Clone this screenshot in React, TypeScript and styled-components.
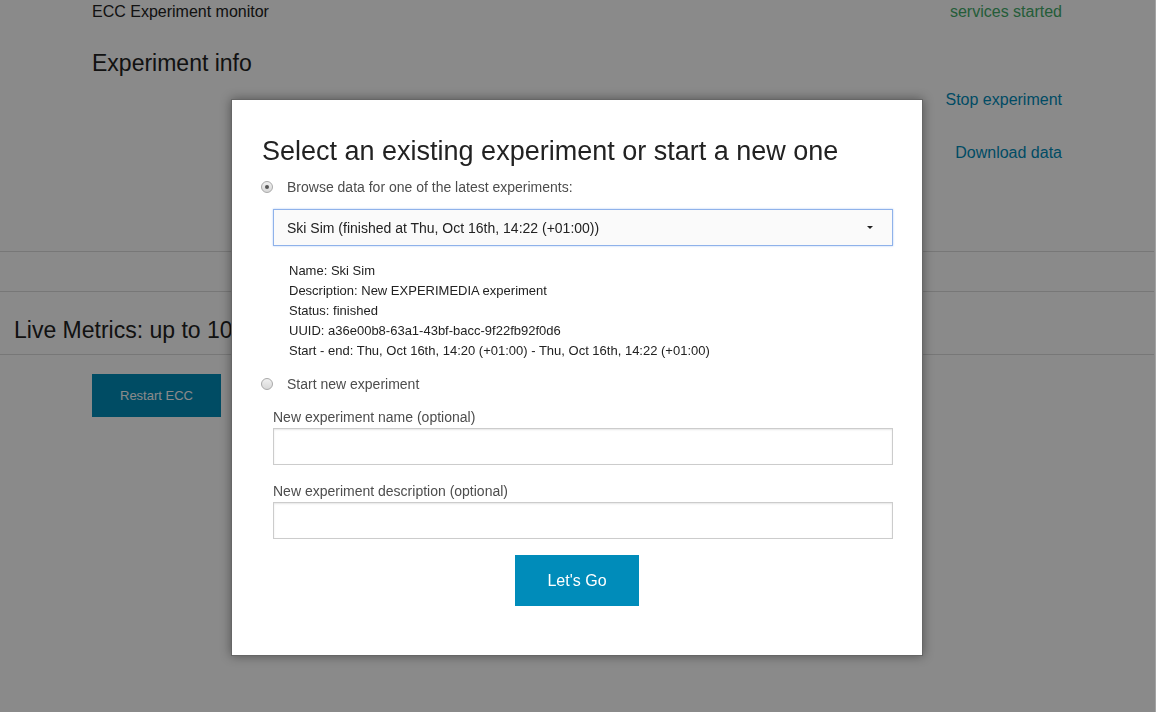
import React from "react";
import styled, { createGlobalStyle } from "styled-components";

const GlobalStyle = createGlobalStyle`
  html, body {
    margin: 0;
    padding: 0;
    background: #ffffff;
    font-family: "Liberation Sans", Arial, Helvetica, sans-serif;
    color: #222222;
  }
  * { box-sizing: border-box; }
`;

const Page = styled.div`
  position: relative;
  width: 1154px;
  min-height: 712px;
`;

const Row = styled.div`
  max-width: 1000px;
  margin: 0 auto;
  padding: 0 15px;
  display: flex;
  justify-content: space-between;
  align-items: flex-start;
`;

const TopBar = styled(Row)`
  padding-top: 1px;
  height: 23px;
  line-height: 22px;
  font-size: 16px;
`;

const Status = styled.span`
  color: #43ac6a;
`;

const InfoRow = styled(Row)`
  padding-top: 25px;
  height: 228px;
`;

const Heading = styled.h2`
  margin: 0;
  font-size: 23px;
  font-weight: normal;
  line-height: 30px;
  color: #222;
`;

const Actions = styled.div`
  display: flex;
  flex-direction: column;
  align-items: flex-end;
  gap: 33px;
  padding-top: 42px;
`;

const Link = styled.a`
  font-size: 16px;
  line-height: 20px;
  color: #008cba;
  text-decoration: none;
`;

const Rule = styled.div`
  height: 1px;
  background: #dddddd;
`;

const Spacer = styled.div`
  height: 39px;
`;

const MetricsHeading = styled.h4`
  margin: 0;
  padding: 22px 14px 8px;
  font-size: 23px;
  font-weight: normal;
  line-height: 32px;
  white-space: nowrap;
`;

const ButtonRow = styled(Row)`
  padding-top: 19px;
`;

const Button = styled.button<{ $large?: boolean }>`
  border: none;
  margin: 0;
  background: #008cba;
  color: #ffffff;
  font-family: inherit;
  font-size: ${(p) => (p.$large ? "16px" : "13px")};
  padding: ${(p) => (p.$large ? "17px 32px" : "14px 28px")};
  line-height: ${(p) => (p.$large ? "17px" : "15px")};
  cursor: pointer;
`;

const Overlay = styled.div`
  position: fixed;
  inset: 0;
  background: rgba(0, 0, 0, 0.46);
  box-shadow: inset -1px 0 0 rgba(255, 255, 255, 0.22);
`;

const Modal = styled.div`
  position: absolute;
  top: 99px;
  left: 231px;
  width: 692px;
  background: #ffffff;
  border: 1px solid #666666;
  box-shadow: 0 0 10px rgba(0, 0, 0, 0.4);
  padding: 30px 30px 49px;
`;

const Title = styled.h3`
  margin: 2px 0 6px;
  font-size: 27px;
  font-weight: normal;
  line-height: 38px;
  color: #222;
`;

const RadioRow = styled.label<{ $top?: number }>`
  display: flex;
  align-items: center;
  height: 22px;
  margin-top: ${(p) => p.$top ?? 0}px;
  font-size: 14px;
  color: #4d4d4d;
`;

const Radio = styled.span<{ $checked?: boolean }>`
  position: relative;
  width: 12px;
  height: 12px;
  margin-left: -1px;
  margin-right: 14px;
  border-radius: 50%;
  border: 1px solid #a9a9a9;
  background: linear-gradient(#f0f0f0, #d8d8d8);
  &::after {
    content: "";
    display: ${(p) => (p.$checked ? "block" : "none")};
    position: absolute;
    top: 3px;
    left: 3px;
    width: 4px;
    height: 4px;
    border-radius: 50%;
    background: #555;
  }
`;

const Indent = styled.div`
  margin-left: 11px;
  width: 620px;
`;

const Select = styled.div`
  margin-top: 11px;
  height: 37px;
  display: flex;
  align-items: center;
  justify-content: space-between;
  padding: 0 19px 0 13px;
  background: #fafafa;
  border: 1px solid #8fb2ea;
  box-shadow: 0 0 2px #b3cdf5;
  font-size: 14px;
  color: #222;
`;

const Caret = styled.span`
  width: 0;
  height: 0;
  border-left: 3px solid transparent;
  border-right: 3px solid transparent;
  border-top: 3px solid #222;
`;

const Details = styled.div`
  margin-top: 15px;
  padding-left: 16px;
  font-size: 13px;
  line-height: 20px;
  color: #222;
`;

const FieldLabel = styled.div<{ $top: number }>`
  margin-top: ${(p) => p.$top}px;
  font-size: 14px;
  line-height: 20px;
  color: #4d4d4d;
`;

const Input = styled.input`
  display: block;
  width: 100%;
  height: 37px;
  margin: 1px 0 0;
  border: 1px solid #cccccc;
  box-shadow: inset 0 1px 2px rgba(0, 0, 0, 0.1);
  background: #fff;
  font-family: inherit;
  font-size: 14px;
  padding: 8px;
`;

const Center = styled.div`
  display: flex;
  justify-content: center;
  margin-top: 16px;
`;

const details = [
  "Name: Ski Sim",
  "Description: New EXPERIMEDIA experiment",
  "Status: finished",
  "UUID: a36e00b8-63a1-43bf-bacc-9f22fb92f0d6",
  "Start - end: Thu, Oct 16th, 14:20 (+01:00) - Thu, Oct 16th, 14:22 (+01:00)",
];

export default function App() {
  return (
    <Page>
      <GlobalStyle />
      <TopBar>
        <span>ECC Experiment monitor</span>
        <Status>services started</Status>
      </TopBar>
      <InfoRow>
        <Heading>Experiment info</Heading>
        <Actions>
          <Link href="#">Stop experiment</Link>
          <Link href="#">Download data</Link>
        </Actions>
      </InfoRow>
      <Rule />
      <Spacer />
      <Rule />
      <MetricsHeading>Live Metrics: up to 10</MetricsHeading>
      <Rule />
      <ButtonRow>
        <Button>Restart ECC</Button>
      </ButtonRow>

      <Overlay />
      <Modal>
        <Title>Select an existing experiment or start a new one</Title>
        <RadioRow>
          <Radio $checked />
          Browse data for one of the latest experiments:
        </RadioRow>
        <Indent>
          <Select>
            <span>Ski Sim (finished at Thu, Oct 16th, 14:22 (+01:00))</span>
            <Caret />
          </Select>
          <Details>
            {details.map((d) => (
              <div key={d}>{d}</div>
            ))}
          </Details>
        </Indent>
        <RadioRow $top={12}>
          <Radio />
          Start new experiment
        </RadioRow>
        <Indent>
          <FieldLabel $top={12}>New experiment name (optional)</FieldLabel>
          <Input />
          <FieldLabel $top={16}>New experiment description (optional)</FieldLabel>
          <Input />
        </Indent>
        <Center>
          <Button $large>Let's Go</Button>
        </Center>
      </Modal>
    </Page>
  );
}
